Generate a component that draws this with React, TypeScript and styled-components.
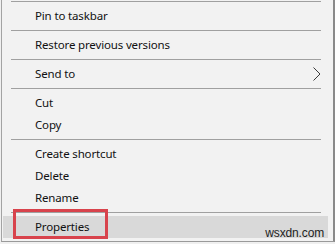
import React from "react";
import styled, { createGlobalStyle } from "styled-components";

const Global = createGlobalStyle`
  html, body {
    margin: 0;
    padding: 0;
    background: #f0f0f0;
  }
  body {
    width: 335px;
    height: 244px;
    overflow: hidden;
  }
`;

const Menu = styled.div`
  position: relative;
  box-sizing: border-box;
  width: 334px;
  height: 242px;
  margin-left: 1px;
  background: #f2f2f2;
  border-left: 1px solid #a3a3a3;
  border-right: 2px solid #8a8a8a;
  border-bottom: 1px solid #9a9a9a;
  padding-top: 1px;
  font-family: "Noto Sans", "Open Sans", sans-serif;
  font-size: 11.5px;
  letter-spacing: -0.15px;
  color: #111;
`;

const Separator = styled.div<{ $first?: boolean }>`
  height: 1px;
  background: #a0a0a0;
  margin: ${(p) => (p.$first ? "0" : "3px")} 12px 3px 9px;
`;

const Item = styled.div<{ $active?: boolean }>`
  position: relative;
  height: 22px;
  line-height: 22px;
  margin: 0 5px 0 1px;
  padding-left: 32px;
  background: ${(p) => (p.$active ? "#d9d9d9" : "transparent")};
  white-space: nowrap;
`;

const Chevron = styled.svg`
  position: absolute;
  right: 7px;
  top: 4px;
`;

const Callout = styled.div`
  position: absolute;
  left: 11px;
  top: 209px;
  width: 95px;
  height: 30px;
  box-sizing: border-box;
  border: 3px solid #d8434c;
`;

const Watermark = styled.div`
  position: absolute;
  right: 9px;
  top: 226px;
  font-family: "Liberation Sans", Arial, sans-serif;
  font-size: 12px;
  color: #1e1e1e;
`;

type Entry = { label: string; submenu?: boolean; active?: boolean };

const groups: Entry[][] = [
  [{ label: "Pin to taskbar" }],
  [{ label: "Restore previous versions" }],
  [{ label: "Send to", submenu: true }],
  [{ label: "Cut" }, { label: "Copy" }],
  [{ label: "Create shortcut" }, { label: "Delete" }, { label: "Rename" }],
  [{ label: "Properties", active: true }],
];

export default function App() {
  return (
    <>
      <Global />
      <Menu>
        {groups.map((group, gi) => (
          <React.Fragment key={gi}>
            <Separator $first={gi === 0} />
            {group.map((entry) => (
              <Item key={entry.label} $active={entry.active}>
                {entry.label}
                {entry.submenu && (
                  <Chevron width="8" height="14" viewBox="0 0 8 14">
                    <polyline
                      points="0.5,0.5 7,7 0.5,13.5"
                      fill="none"
                      stroke="#3a3a3a"
                      strokeWidth="1"
                    />
                  </Chevron>
                )}
              </Item>
            ))}
          </React.Fragment>
        ))}
        <Callout />
        <Watermark>wsxdn.com</Watermark>
      </Menu>
    </>
  );
}
